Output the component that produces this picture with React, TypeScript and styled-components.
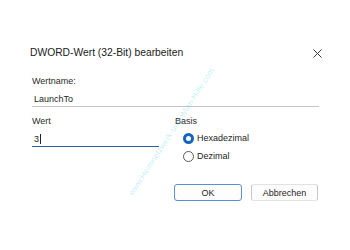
import React from "react";
import styled, { createGlobalStyle } from "styled-components";

const Global = createGlobalStyle`
  html, body { margin: 0; padding: 0; background: #ffffff; }
  body { font-family: "Liberation Sans", Arial, sans-serif; }
`;

const Page = styled.div`
  position: relative;
  width: 350px;
  height: 250px;
  background: #ffffff;
  overflow: hidden;
  box-sizing: border-box;
  padding: 46px 31px 0 30px;
`;

const TitleBar = styled.div`
  display: flex;
  align-items: center;
  justify-content: space-between;
  height: 14px;
`;

const Title = styled.div`
  font-size: 10.3px;
  line-height: 14px;
  color: #1b1b1b;
`;

const Close = styled.button`
  border: 0;
  background: none;
  padding: 0;
  width: 10px;
  height: 10px;
  margin-right: -3px;
  display: flex;
  align-items: center;
  justify-content: center;
`;

const Body = styled.div`
  padding-left: 2px;
  margin-top: 15px;
`;

const Label = styled.div`
  font-size: 9px;
  line-height: 12px;
  height: 12px;
  color: #2b2b2b;
`;

const TextField = styled.div<{ $active?: boolean }>`
  margin-top: 4px;
  height: 15px;
  display: flex;
  align-items: center;
  padding-left: 2px;
  font-size: 9px;
  color: #1e1e1e;
  border-bottom: 1px solid ${(p) => (p.$active ? "#2f5cb3" : "#c4c4c4")};
`;

const Caret = styled.span`
  display: inline-block;
  width: 1px;
  height: 10px;
  margin-left: 1px;
  background: #222;
`;

const Columns = styled.div`
  display: grid;
  grid-template-columns: 127px 1fr;
  column-gap: 16px;
  margin-top: 8px;
`;

const RadioGroup = styled.div`
  display: flex;
  flex-direction: column;
  gap: 6px;
  padding-left: 8px;
  margin-top: 5px;
`;

const RadioRow = styled.label`
  display: flex;
  align-items: center;
  gap: 3px;
  height: 12px;
  font-size: 9px;
  color: #1e1e1e;
`;

const RadioDot = styled.span<{ $checked?: boolean }>`
  box-sizing: border-box;
  width: 11px;
  height: 11px;
  border-radius: 50%;
  border: ${(p) => (p.$checked ? "3px solid #1565c0" : "1px solid #5a5a5a")};
  background: #fff;
`;

const Buttons = styled.div`
  display: flex;
  justify-content: flex-end;
  gap: 9px;
  margin-top: 22px;
  padding-right: 1px;
`;

const Button = styled.button<{ $primary?: boolean }>`
  box-sizing: border-box;
  width: ${(p) => (p.$primary ? "68px" : "67px")};
  height: 17px;
  border-radius: 3px;
  background: #fdfdfd;
  font-family: "Liberation Sans", Arial, sans-serif;
  font-size: 9px;
  color: #1e1e1e;
  padding: 0;
  border: 1px solid ${(p) => (p.$primary ? "#5a8fd6" : "#e2e2e2")};
  border-left-color: ${(p) => (p.$primary ? "#5a8fd6" : "#c8c8c8")};
  border-right-color: ${(p) => (p.$primary ? "#5a8fd6" : "#c8c8c8")};
`;

const Watermark = styled.div`
  position: absolute;
  left: 82px;
  top: 127px;
  width: 180px;
  font-size: 8px;
  line-height: 10px;
  letter-spacing: 0.2px;
  color: rgba(40, 200, 230, 0.3);
  transform: rotate(-57deg);
  transform-origin: center;
  white-space: nowrap;
  text-align: center;
  pointer-events: none;
`;

export default function App() {
  return (
    <>
      <Global />
      <Page>
        <TitleBar>
          <Title>DWORD-Wert (32-Bit) bearbeiten</Title>
          <Close aria-label="Schließen">
            <svg width="9" height="9" viewBox="0 0 9 9">
              <path d="M0.5 0.5 L8.5 8.5 M8.5 0.5 L0.5 8.5" stroke="#3a3a3a" strokeWidth="1" fill="none" />
            </svg>
          </Close>
        </TitleBar>
        <Body>
          <Label>Wertname:</Label>
          <TextField>LaunchTo</TextField>
          <Columns>
            <div>
              <Label>Wert</Label>
              <TextField $active>
                3<Caret />
              </TextField>
            </div>
            <div>
              <Label>Basis</Label>
              <RadioGroup>
                <RadioRow>
                  <RadioDot $checked />
                  Hexadezimal
                </RadioRow>
                <RadioRow>
                  <RadioDot />
                  Dezimal
                </RadioRow>
              </RadioGroup>
            </div>
          </Columns>
          <Buttons>
            <Button $primary>OK</Button>
            <Button>Abbrechen</Button>
          </Buttons>
        </Body>
        <Watermark>www.Heimnetzwerk-und-Wlan-Hilfe.com</Watermark>
      </Page>
    </>
  );
}
